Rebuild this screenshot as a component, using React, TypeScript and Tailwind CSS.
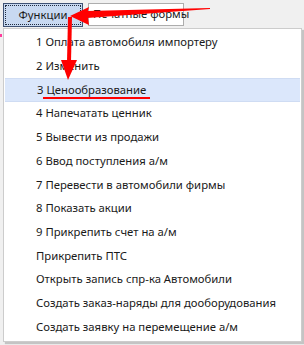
import React from 'react';

const items = [
  '1 Оплата автомобиля импортеру',
  '2 Изменить',
  '3 Ценообразование',
  '4 Напечатать ценник',
  '5 Вывести из продажи',
  '6 Ввод поступления а/м',
  '7 Перевести в автомобили фирмы',
  '8 Показать акции',
  '9 Прикрепить счет на а/м',
  'Прикрепить ПТС',
  'Открыть запись спр-ка Автомобили',
  'Создать заказ-наряды для дооборудования',
  'Создать заявку на перемещение а/м',
];

export default function App() {
  return (
    <div
      className="relative w-[304px] h-[345px] overflow-hidden bg-[#f0f0f0] text-[11.3px] text-[#1a1a1a]"
      style={{ fontFamily: '"Noto Sans", sans-serif' }}
    >
      {/* Toolbar */}
      <div className="flex items-start gap-[5px] pl-[3px] pt-[3px] h-[28px]">
        <div className="w-[80px] h-[24px] border border-[#3f5274] bg-[#c8d9f1] p-[1px]">
          <div className="h-full border border-dotted border-[#1f2a3c] flex items-center justify-center">
            Функции
          </div>
        </div>
        <div className="w-[96px] h-[23px] border border-[#adadad] bg-white flex items-center pl-[4px] whitespace-nowrap">
          Печатные формы
        </div>
      </div>

      {/* Dropdown menu */}
      <div className="ml-[3px] w-[299px] h-[314px] bg-white border border-[#cccccc] shadow-[2px_2px_1px_rgba(0,0,0,0.18)] pt-[2px]">
        <div className="flex flex-col">
          {items.map((label, i) => (
            <div
              key={label}
              className={`h-[23.7px] flex items-center pl-[32px] whitespace-nowrap ${
                i === 2 ? 'bg-[#dbe7fb] border-y border-[#cfdcf3] mx-[1px] pl-[31px]' : ''
              }`}
            >
              {label}
            </div>
          ))}
        </div>
      </div>

      {/* Pink mark at the left edge */}
      <div className="absolute left-0 top-[34px] w-[2px] h-[3px] bg-[#ff3c9c]" />

      {/* Red annotations */}
      <svg className="absolute inset-0 pointer-events-none" width="304" height="345" viewBox="0 0 304 345">
        <polygon points="210,8 86,11 87,18 210,9" fill="#ff0000" />
        <polygon points="70,16 89,7 87,14 88,18 89,25" fill="#ff0000" />
        <polygon points="68,17 72,17 71,62 67,62" fill="#ff0000" />
        <polygon points="61,60 77,60 68,80" fill="#ff0000" />
        <rect x="43" y="97" width="107" height="2" fill="#ff0000" />
      </svg>
    </div>
  );
}
